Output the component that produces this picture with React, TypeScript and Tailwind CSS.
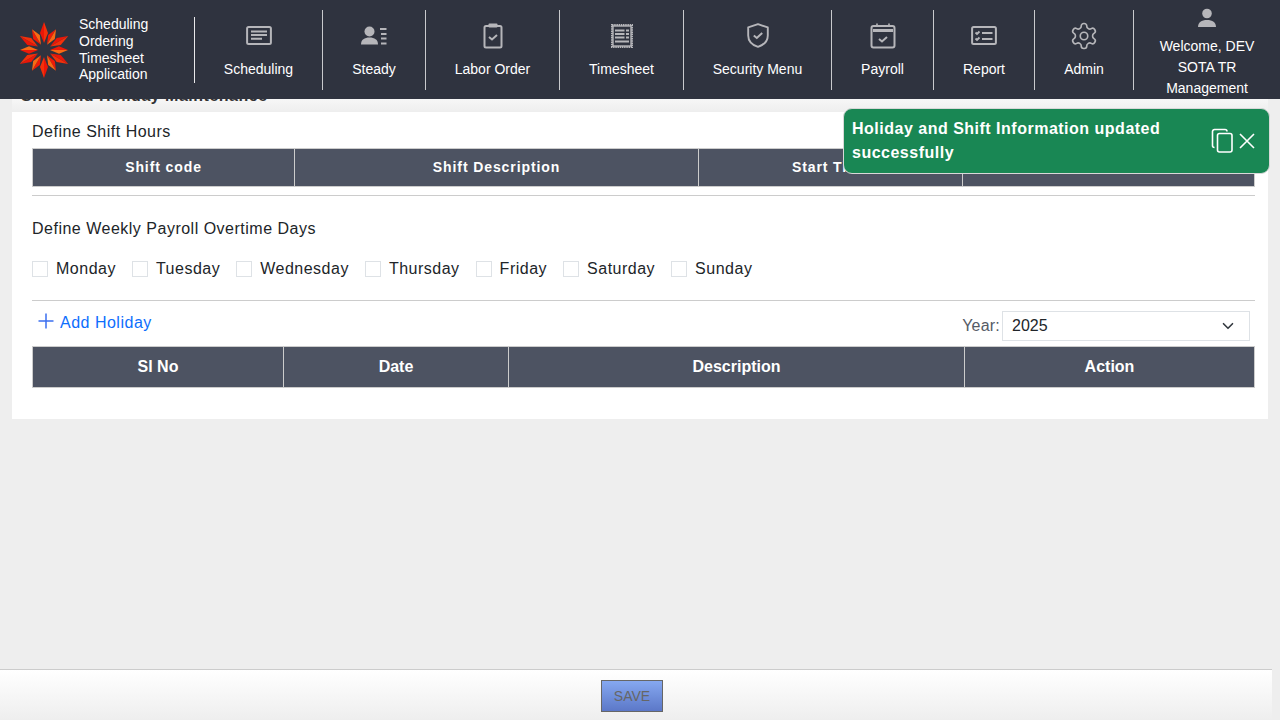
import type { ReactNode } from "react";

const stroke = "#b6b6ba";

// Icons are hand drawn since the app's own set has no exact match in the packages.
function ScheduleIcon() {
  return (
    <svg width="26" height="20" viewBox="0 0 26 20" fill="none">
      <rect x="1.100" y="1.100" width="23.800" height="17" rx="1.500" stroke={stroke} strokeWidth="2" />
      <path d="M5 5.500h16M5 9h16M5 12.800h11" stroke={stroke} strokeWidth="1.900" />
    </svg>
  );
}

function SteadyIcon() {
  return (
    <svg width="26" height="20" viewBox="0 0 26 20" fill={stroke}>
      <circle cx="8.500" cy="5.500" r="5" />
      <path d="M0 18.500c0-5 3.500-7 8.500-7s8.500 2 8.500 7z" />
      <path d="M19 2h6.500v2h-6.500zM20 7h5.500v2H20zM20 11.500h5.500v2H20zM20 16.500h5.500v2H20z" />
    </svg>
  );
}

function ClipboardIcon() {
  return (
    <svg width="20" height="26" viewBox="0 0 20 26" fill="none">
      <rect x="1.500" y="3" width="17" height="21.500" rx="1.500" stroke={stroke} strokeWidth="2" />
      <rect x="5.500" y="0.500" width="9" height="4" rx="1" fill={stroke} />
      <path d="M6 14l3 2.500 5-4.500" stroke={stroke} strokeWidth="2" />
    </svg>
  );
}

function TimesheetIcon() {
  return (
    <svg width="22" height="24" viewBox="0 0 22 24" fill="none">
      <rect x="1" y="1" width="20" height="22" stroke={stroke} strokeWidth="2" strokeDasharray="1.500 0.700" />
      <rect x="2" y="2" width="18" height="20" stroke={stroke} strokeWidth="1.400" />
      <path d="M4 6.500h9.500M4 10h9.500M4 13.500h9.500M4 17.500h14M15 6.500h3M15 10h3M15 13.500h3" stroke={stroke} strokeWidth="2" />
    </svg>
  );
}

function ShieldIcon() {
  return (
    <svg width="22" height="25" viewBox="0 0 22 25" fill="none">
      <path d="M11 1.200l9.800 3.200v8c0 5.500-4 9.500-9.800 11.500-5.800-2-9.800-6-9.800-11.500v-8z" stroke={stroke} strokeWidth="1.900" strokeLinejoin="round" />
      <path d="M6.800 12.500l3 2.500 5.400-5" stroke={stroke} strokeWidth="2" />
    </svg>
  );
}

function PayrollIcon() {
  return (
    <svg width="26" height="26" viewBox="0 0 26 26" fill="none">
      <rect x="1.500" y="3" width="23" height="21.500" rx="2" stroke={stroke} strokeWidth="2" />
      <path d="M7 0.500v3M19 0.500v3" stroke={stroke} strokeWidth="1.600" />
      <path d="M3 7.500h20" stroke={stroke} strokeWidth="3" />
      <path d="M9 16l3 2.500 5-4.500" stroke={stroke} strokeWidth="2" />
    </svg>
  );
}

function ReportIcon() {
  return (
    <svg width="26" height="20" viewBox="0 0 26 20" fill="none">
      <rect x="1.100" y="1.100" width="23.800" height="17" rx="1.500" stroke={stroke} strokeWidth="2" />
      <path d="M4.500 6.500l1.500 1.500 2.500-2.500M4.500 12.500l1.500 1.500 2.500-2.500M11 7h10.500M11 13h10.500" stroke={stroke} strokeWidth="1.800" />
    </svg>
  );
}

function GearIcon() {
  return (
    <svg width="30" height="30" viewBox="0 0 24 24" fill="none" stroke={stroke} strokeWidth="1.300" strokeLinejoin="round">
      <path d="M12.220 2h-.440a2 2 0 0 0-2 2v.180a2 2 0 0 1-1 1.730l-.430.250a2 2 0 0 1-2 0l-.150-.080a2 2 0 0 0-2.730.730l-.220.380a2 2 0 0 0 .730 2.730l.150.100a2 2 0 0 1 1 1.720v.510a2 2 0 0 1-1 1.740l-.150.090a2 2 0 0 0-.730 2.730l.220.380a2 2 0 0 0 2.730.730l.150-.080a2 2 0 0 1 2 0l.430.250a2 2 0 0 1 1 1.730V20a2 2 0 0 0 2 2h.440a2 2 0 0 0 2-2v-.180a2 2 0 0 1 1-1.730l.430-.250a2 2 0 0 1 2 0l.150.080a2 2 0 0 0 2.730-.730l.220-.390a2 2 0 0 0-.730-2.730l-.150-.080a2 2 0 0 1-1-1.740v-.500a2 2 0 0 1 1-1.740l.150-.090a2 2 0 0 0 .730-2.730l-.220-.380a2 2 0 0 0-2.730-.730l-.150.080a2 2 0 0 1-2 0l-.430-.250a2 2 0 0 1-1-1.730V4a2 2 0 0 0-2-2z" />
      <circle cx="12" cy="12" r="3" />
    </svg>
  );
}

function UserIcon() {
  return (
    <svg width="20" height="20" viewBox="0 0 20 20" fill={stroke}>
      <circle cx="10" cy="5.500" r="4.800" />
      <path d="M1 19c0-4.500 3.500-7 9-7s9 2.500 9 7z" />
    </svg>
  );
}

// Sunburst logo: twelve two-tone darts round a hollow centre, every other one longer.
function Logo() {
  const angles = [0, 30, 60, 90, 120, 150, 180, 210, 240, 270, 300, 330];
  return (
    <svg width="52" height="56" viewBox="-26 -28 52 56">
      {angles.map((a) =>
        a % 60 === 0 ? (
          <g key={a} transform={`rotate(${a})`}>
            <path d="M0 -28L-4 -17L0 -7z" fill="#ea1608" />
            <path d="M0 -28L4 -17L0 -7z" fill="#f4300a" />
          </g>
        ) : (
          <g key={a} transform={`rotate(${a})`}>
            <path d="M0 -24L-3.800 -15L0 -6z" fill="#ee1a08" />
            <path d="M0 -24L3.800 -15L0 -6z" fill="#f96a14" />
          </g>
        ),
      )}
    </svg>
  );
}

const navItems: { label: string; icon: ReactNode; width: string }[] = [
  { label: "Scheduling", icon: <ScheduleIcon />, width: "w-[128px]" },
  { label: "Steady", icon: <SteadyIcon />, width: "w-[103px]" },
  { label: "Labor Order", icon: <ClipboardIcon />, width: "w-[134px]" },
  { label: "Timesheet", icon: <TimesheetIcon />, width: "w-[124px]" },
  { label: "Security Menu", icon: <ShieldIcon />, width: "w-[148px]" },
  { label: "Payroll", icon: <PayrollIcon />, width: "w-[102px]" },
  { label: "Report", icon: <ReportIcon />, width: "w-[101px]" },
  { label: "Admin", icon: <GearIcon />, width: "w-[99px]" },
];

function NavItem({ label, icon, width }: { label: string; icon: ReactNode; width: string }) {
  return (
    <div className={`${width} flex h-[80px] flex-none flex-col items-center border-r border-[#c9cacd]`}>
      <div className="mt-[8px] flex h-[36px] items-center justify-center">{icon}</div>
      <span className="mt-[5px] text-sm leading-[20px] text-white">{label}</span>
    </div>
  );
}

function Header() {
  return (
    <header className="relative z-10 flex h-[99px] flex-none items-center bg-[#2f333f]">
      <div className="flex h-[66px] w-[195px] flex-none items-center border-r border-[#e8e8ea] pl-[18px]">
        <Logo />
        <div className="ml-[9px] text-sm leading-[16.6px] text-white">
          <div>Scheduling</div>
          <div>Ordering</div>
          <div>Timesheet</div>
          <div>Application</div>
        </div>
      </div>
      {navItems.map((item) => (
        <NavItem key={item.label} {...item} />
      ))}
      <div className="flex flex-1 flex-col items-center pt-[7px] text-center text-sm leading-[21px] text-white">
        <UserIcon />
        <div className="mt-[8px]">Welcome, DEV</div>
        <div>SOTA TR</div>
        <div>Management</div>
      </div>
    </header>
  );
}

function Toast() {
  return (
    <div className="absolute left-[843px] top-[108px] z-20 flex h-[66px] w-[427px] items-center rounded-[9px] border border-[#d8d8d8] bg-[#198754] pl-[8px] text-white">
      <div className="w-[353px] text-base font-bold leading-[24px] tracking-[0.5px]">
        Holiday and Shift Information updated successfully
      </div>
      <svg className="ml-[6px]" width="24" height="26" viewBox="0 0 24 26" fill="none" stroke="white" strokeWidth="1.600">
        <rect x="6.500" y="5.500" width="14.500" height="18.500" rx="2" />
        <path d="M3.500 19.500A2 2 0 0 1 1.500 17.500V3.500A2 2 0 0 1 3.500 1.500H14A2 2 0 0 1 16 3.500" />
      </svg>
      <svg className="ml-[3px]" width="18" height="18" viewBox="0 0 18 18" fill="none" stroke="white" strokeWidth="1.600">
        <path d="M2 2l14 14M16 2L2 16" />
      </svg>
    </div>
  );
}

function HeadRow({ cells, className }: { cells: { label: string; width: string }[]; className: string }) {
  return (
    <div className={`flex border border-[#cccccc] bg-[#4d5362] font-bold text-white ${className}`}>
      {cells.map((c, i) => (
        <div
          key={c.label}
          className={`${c.width} flex items-center justify-center ${i < cells.length - 1 ? "border-r border-[#cccccc]" : "flex-1"}`}
        >
          {c.label}
        </div>
      ))}
    </div>
  );
}

const days = ["Monday", "Tuesday", "Wednesday", "Thursday", "Friday", "Saturday", "Sunday"];

function DayCheck({ label }: { label: string }) {
  return (
    <label className="flex items-center gap-[8px]">
      <span className="h-[16px] w-[16px] border border-[#dee2e6] bg-white" />
      <span>{label}</span>
    </label>
  );
}

export default function App() {
  return (
    <div className="relative flex h-screen flex-col overflow-hidden bg-[#eeeeee] font-['Liberation_Sans',Arial,sans-serif] text-[#212529]">
      <Header />
      <Toast />
      <main className="flex-1 px-[12px]">
        <div className="-mt-[13px] h-[26px] bg-gradient-to-b from-[#ffffff] to-[#eeeeee] pl-[9px] pt-px text-base font-bold leading-[18px] tracking-[0.5px] text-[#333333]">
          Shift and Holiday Maintenance
        </div>
        <section className="h-[307px] bg-white pl-[20px] pr-[13px] text-base tracking-[0.5px]">
          <div className="flex h-[36px] items-center pt-[4px]">Define Shift Hours</div>
          <HeadRow
            className="h-[39px] text-[14px] tracking-[0.9px]"
            cells={[
              { label: "Shift code", width: "w-[262px]" },
              { label: "Shift Description", width: "w-[404px]" },
              { label: "Start Time", width: "w-[264px]" },
              { label: "End Time", width: "" },
            ]}
          />
          <div className="mt-[8px] h-px bg-[#cccccc]" />
          <div className="mt-[21px] leading-[24px]">Define Weekly Payroll Overtime Days</div>
          <div className="mt-[15px] flex h-[26px] items-center gap-[16px]">
            {days.map((d) => (
              <DayCheck key={d} label={d} />
            ))}
          </div>
          <div className="mt-[18px] h-px bg-[#cccccc]" />
          <div className="flex h-[45px] items-start justify-between">
            <div className="mt-[10px] flex items-center pl-[6px] leading-[24px] text-[#0d6efd]">
              <svg className="-mt-[4px]" width="16" height="16" viewBox="0 0 16 16" fill="none" stroke="#3b6ff0" strokeWidth="1.500">
                <path d="M8 0.500v15M0.500 8h15" />
              </svg>
              <span className="ml-[6px]">Add Holiday</span>
            </div>
            <div className="mr-[5px] mt-[10px] flex items-center">
              <span className="mr-[2px] tracking-[0.2px] text-[#555b66]">Year:</span>
              <div className="flex h-[30px] w-[248px] items-center justify-between border border-[#dee2e6] bg-white pl-[9px] pr-[15px] tracking-normal">
                <span>2025</span>
                <svg width="12" height="12" viewBox="0 0 16 16" fill="none" stroke="#343a40" strokeWidth="2.200" strokeLinecap="round" strokeLinejoin="round">
                  <path d="M2 5l6 6 6-6" />
                </svg>
              </div>
            </div>
          </div>
          <HeadRow
            className="h-[42px] tracking-normal"
            cells={[
              { label: "Sl No", width: "w-[251px]" },
              { label: "Date", width: "w-[225px]" },
              { label: "Description", width: "w-[456px]" },
              { label: "Action", width: "" },
            ]}
          />
        </section>
      </main>
      <footer className="flex h-[51px] w-[1272px] flex-none justify-center border-t border-[#cccccc] bg-gradient-to-b from-[#ffffff] to-[#eeeeee] pr-[8px] pt-[10px]">
        <button className="h-[32px] w-[62px] border border-[#666666] bg-gradient-to-b from-[#86a8f0] to-[#5c78c8] text-sm text-[#666666]">
          SAVE
        </button>
      </footer>
    </div>
  );
}
